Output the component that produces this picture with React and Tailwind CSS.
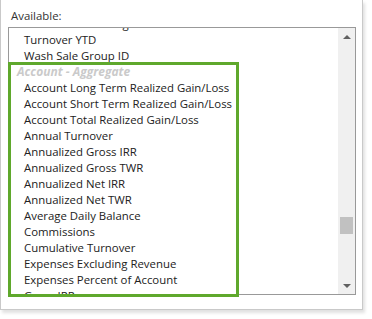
const items = [
  { label: 'Turnover Percentage' },
  { label: 'Turnover YTD' },
  { label: 'Wash Sale Group ID' },
  { label: 'Account - Aggregate', header: true },
  { label: 'Account Long Term Realized Gain/Loss' },
  { label: 'Account Short Term Realized Gain/Loss' },
  { label: 'Account Total Realized Gain/Loss' },
  { label: 'Annual Turnover' },
  { label: 'Annualized Gross IRR' },
  { label: 'Annualized Gross TWR' },
  { label: 'Annualized Net IRR' },
  { label: 'Annualized Net TWR' },
  { label: 'Average Daily Balance' },
  { label: 'Commissions' },
  { label: 'Cumulative Turnover' },
  { label: 'Expenses Excluding Revenue' },
  { label: 'Expenses Percent of Account' },
  { label: 'Gross IRR' },
]

function ScrollBar() {
  return (
    <div className="w-[17px] bg-[#f0f0f0] flex flex-col">
      <div className="h-[17px] flex items-center justify-center">
        <div className="w-0 h-0 border-x-[4px] border-x-transparent border-b-[4px] border-b-[#606060]" />
      </div>
      <div className="h-[172px]" />
      <div className="h-[17px] mx-[2px] bg-[#c1c1c1]" />
      <div className="flex-1" />
      <div className="h-[17px] flex items-center justify-center">
        <div className="w-0 h-0 border-x-[4px] border-x-transparent border-t-[4px] border-t-[#606060]" />
      </div>
    </div>
  )
}

export default function App() {
  return (
    <div className="w-[372px] h-[319px] bg-white relative font-['Segoe_UI','Open_Sans',sans-serif] text-[11.4px] text-[#222]">
      <div className="w-[363px] h-[310px] border border-t-0 border-[#c9c9c9] shadow-[2px_3px_3px_rgba(0,0,0,0.12)] pt-[8px] pl-[7px]">
        <div className="ml-[3px] leading-[16px] text-[#333]">Available:</div>

        <div className="mt-[3px] w-[348px] h-[268px] border border-[#999] flex">
          {/* list */}
          <div className="flex-1 overflow-hidden">
            <div className="-mt-[12px]">
              {items.map((item) =>
                item.header ? (
                  <div key={item.label} className="h-[16px] leading-[16px] pl-[8px] text-[12px] font-bold italic text-[#cacaca] whitespace-nowrap">
                    {item.label}
                  </div>
                ) : (
                  <div key={item.label} className="h-[16px] leading-[16px] pl-[15px] whitespace-nowrap">
                    {item.label}
                  </div>
                )
              )}
            </div>
          </div>
          <ScrollBar />
        </div>
      </div>

      {/* highlight */}
      <div className="absolute left-[8px] top-[62px] w-[231px] h-[235px] border-[3px] border-[#5fa82c]" />
    </div>
  )
}
